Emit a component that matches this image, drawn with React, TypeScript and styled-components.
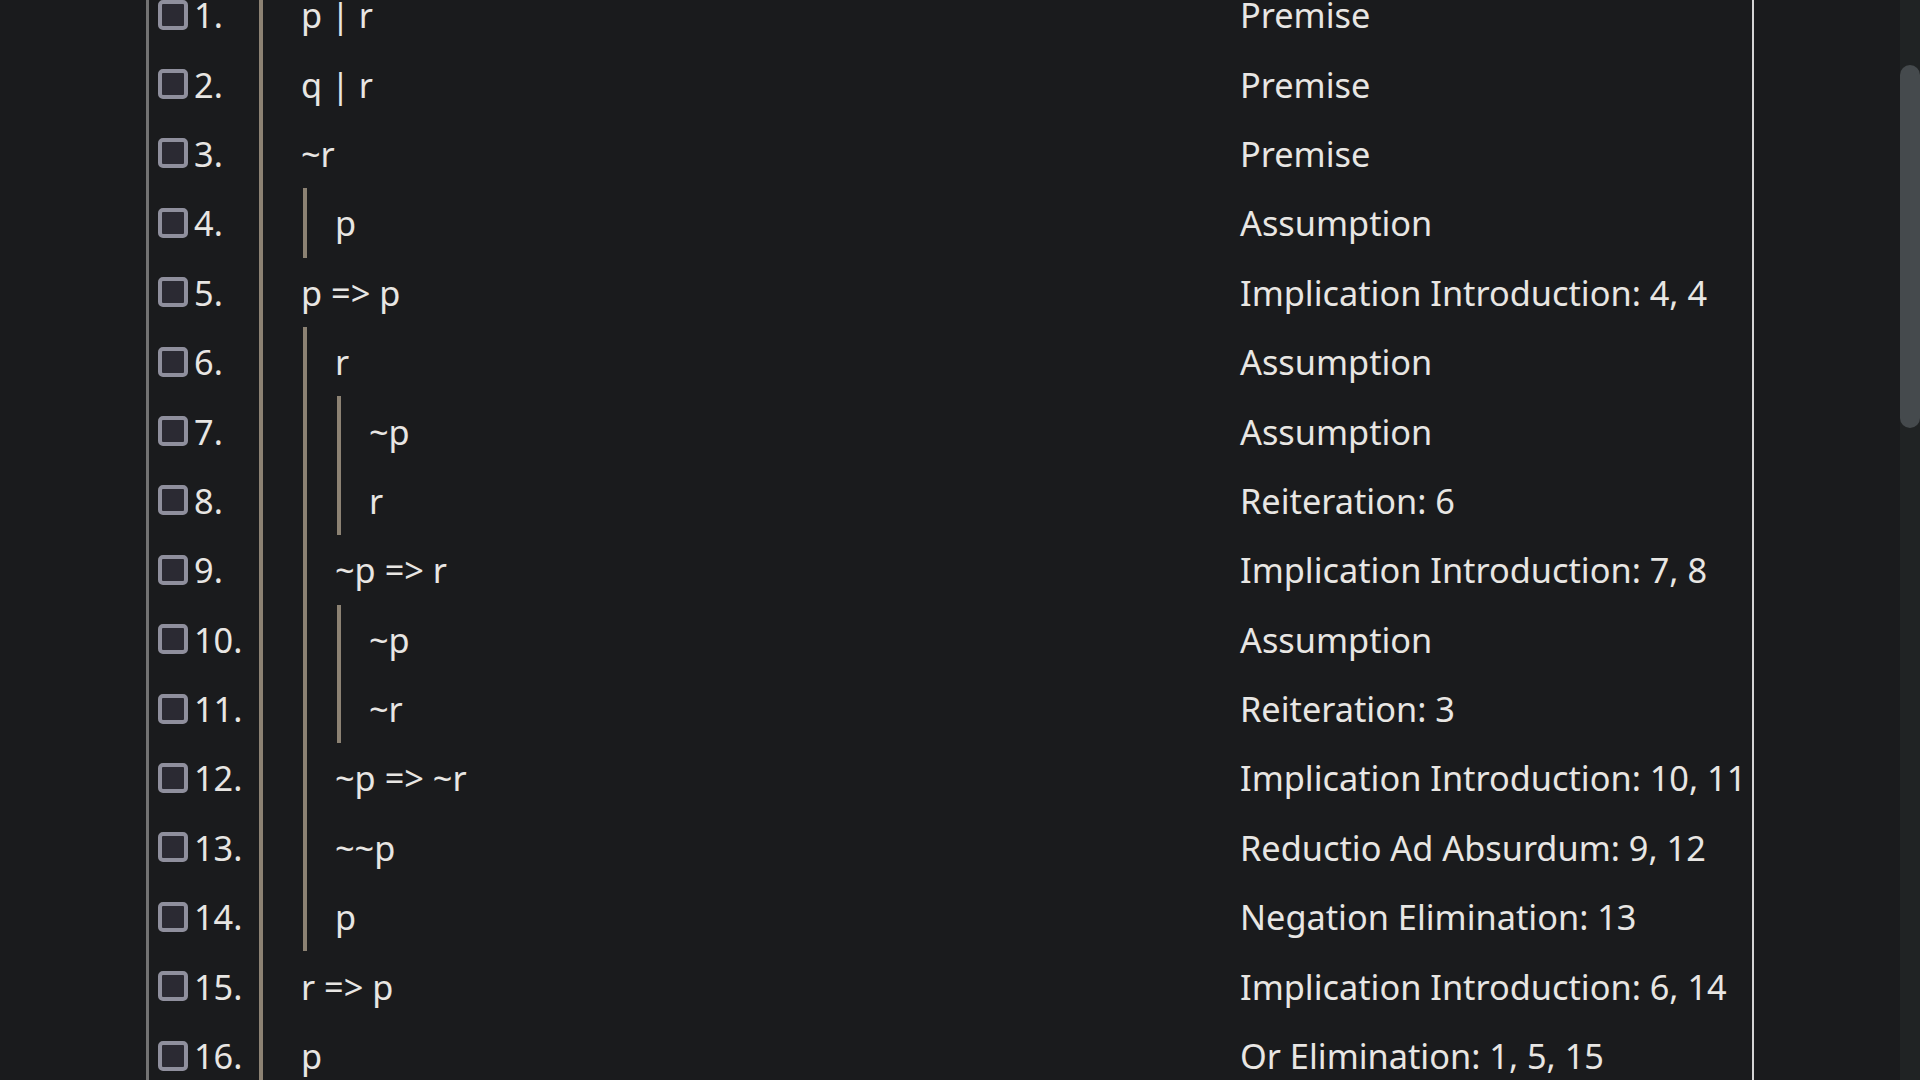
import React, { useLayoutEffect, useRef } from "react";
import styled, { createGlobalStyle } from "styled-components";

type Line = { formula: string; depth: number; rule: string };

const proof: Line[] = [
  { formula: "p | r", depth: 0, rule: "Premise" },
  { formula: "q | r", depth: 0, rule: "Premise" },
  { formula: "~r", depth: 0, rule: "Premise" },
  { formula: "p", depth: 1, rule: "Assumption" },
  { formula: "p => p", depth: 0, rule: "Implication Introduction: 4, 4" },
  { formula: "r", depth: 1, rule: "Assumption" },
  { formula: "~p", depth: 2, rule: "Assumption" },
  { formula: "r", depth: 2, rule: "Reiteration: 6" },
  { formula: "~p => r", depth: 1, rule: "Implication Introduction: 7, 8" },
  { formula: "~p", depth: 2, rule: "Assumption" },
  { formula: "~r", depth: 2, rule: "Reiteration: 3" },
  { formula: "~p => ~r", depth: 1, rule: "Implication Introduction: 10, 11" },
  { formula: "~~p", depth: 1, rule: "Reductio Ad Absurdum: 9, 12" },
  { formula: "p", depth: 1, rule: "Negation Elimination: 13" },
  { formula: "r => p", depth: 0, rule: "Implication Introduction: 6, 14" },
  { formula: "p", depth: 0, rule: "Or Elimination: 1, 5, 15" },
];

const GlobalStyle = createGlobalStyle`
  html, body {
    margin: 0;
    padding: 0;
    height: 100%;
    overflow: hidden;
    background: #1a1b1d;
  }
  #root {
    height: 100%;
  }
`

const Page = styled.div`
  display: flex;
  height: 100vh;
  background: #1a1b1d;
  color: #e8e6e3;
  font-family: "Noto Sans", "Open Sans", sans-serif;
  font-size: 34.3px;
`

const Viewport = styled.div`
  flex: 1;
  overflow: hidden;
`

// the page scrollbar, headless chrome hides the native one
const ScrollTrack = styled.div`
  width: 20px;
  flex-shrink: 0;
  background: #202324;
`

const ScrollThumb = styled.div`
  margin-top: 65px;
  height: 363px;
  border-radius: 10px;
  background: #454a4d;
`

// room above and below the proof, the page is scrolled down into it
const Content = styled.div`
  padding: 173px 0 1927px;
`

const Proof = styled.div`
  box-sizing: border-box;
  width: 1608px;
  margin: 0 auto;
  border-left: 3px solid #737373;
  border-right: 2px solid #d4d4d4;
`

const Row = styled.div`
  display: grid;
  grid-template-columns: 110px 1fr 512px;
  height: 69.4px;
`

const NumCell = styled.div`
  display: flex;
  align-items: center;
`

const Check = styled.input`
  -webkit-appearance: none;
  appearance: none;
  box-sizing: border-box;
  width: 30px;
  height: 30px;
  margin: 0 6px 0 9px;
  border: 4px solid #8f8f9d;
  border-radius: 5px;
  background: #2b2a33;
`

const FormulaCell = styled.div`
  display: flex;
  align-items: stretch;
  border-left: 4px solid #8c8273;
  padding-left: 38px;
`

const Bar = styled.div`
  display: flex;
  align-items: stretch;
  margin-left: 2px;
  border-left: 4px solid #8c8273;
  padding-left: 28px;
`

const Formula = styled.span`
  align-self: center;
  white-space: pre;
`

const Rule = styled.div`
  display: flex;
  align-items: center;
  white-space: nowrap;
`

function Indent({ depth, children }: { depth: number; children: React.ReactNode }) {
  if (depth === 0) return <Formula>{children}</Formula>
  return (
    <Bar>
      <Indent depth={depth - 1}>{children}</Indent>
    </Bar>
  )
}

export default function App() {
  const view = useRef<HTMLDivElement>(null)

  useLayoutEffect(() => {
    if (view.current) view.current.scrollTop = 193
  }, [])

  return (
    <>
      <GlobalStyle />
      <Page>
        <Viewport ref={view}>
          <Content>
            <Proof>
              {proof.map((line, i) => (
                <Row key={i}>
                  <NumCell>
                    <Check type="checkbox" />
                    {i + 1}.
                  </NumCell>
                  <FormulaCell>
                    <Indent depth={line.depth}>{line.formula}</Indent>
                  </FormulaCell>
                  <Rule>{line.rule}</Rule>
                </Row>
              ))}
            </Proof>
          </Content>
        </Viewport>
        <ScrollTrack>
          <ScrollThumb />
        </ScrollTrack>
      </Page>
    </>
  )
}
